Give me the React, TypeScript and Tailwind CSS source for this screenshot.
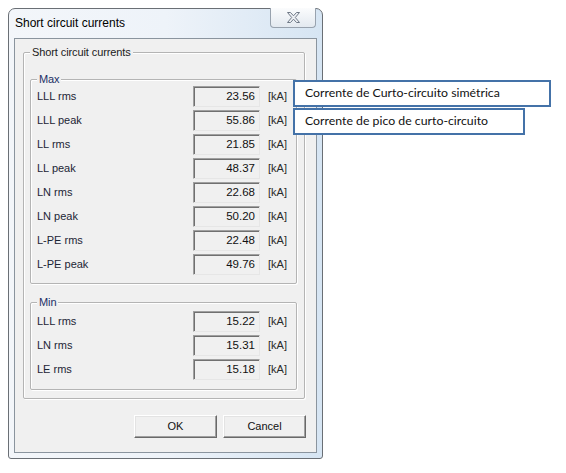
import React from "react";

const maxRows: [string, string][] = [
  ["LLL rms", "23.56"],
  ["LLL peak", "55.86"],
  ["LL rms", "21.85"],
  ["LL peak", "48.37"],
  ["LN rms", "22.68"],
  ["LN peak", "50.20"],
  ["L-PE rms", "22.48"],
  ["L-PE peak", "49.76"],
];

const minRows: [string, string][] = [
  ["LLL rms", "15.22"],
  ["LN rms", "15.31"],
  ["LE rms", "15.18"],
];

function Row({ label, value }: { label: string; value: string }) {
  return (
    <div className="flex items-center h-[21px]">
      <div className="w-[156px] text-[11px] text-[#1c2535] leading-none">{label}</div>
      <div className="w-[67px] h-[21px] flex items-center justify-end pr-[4px] bg-[#f0f0f0] border border-t-[#a0a0a0] border-l-[#a0a0a0] border-b-[#e6e6e6] border-r-[#e6e6e6] shadow-[inset_1px_1px_0_#707070] text-[11.5px] text-[#111] leading-none">
        {value}
      </div>
      <div className="ml-[8px] text-[11px] text-[#2a2a2a] leading-none">[kA]</div>
    </div>
  );
}

function Group({
  label,
  labelColor,
  className,
  children,
}: {
  label: string;
  labelColor: string;
  className: string;
  children?: React.ReactNode;
}) {
  return (
    <div className={"relative border border-[#b4b4b4] rounded-[2px] shadow-[1px_1px_0_#ffffff,inset_1px_1px_0_#ffffff] " + className}>
      <span className={"absolute -top-[8px] left-[6px] px-[2px] bg-[#f0f0f0] text-[11px] leading-[14px] tracking-[-0.1px] " + labelColor}>
        {label}
      </span>
      {children}
    </div>
  );
}

function Btn({ children }: { children: React.ReactNode }) {
  return (
    <button className="w-[83px] h-[23px] flex items-center justify-center bg-[#f0f0f0] border border-t-[#ffffff] border-l-[#ffffff] border-b-[#696969] border-r-[#696969] shadow-[inset_-1px_-1px_0_#a0a0a0,inset_1px_1px_0_#e3e3e3] text-[11px] text-[#111]">
      {children}
    </button>
  );
}

export default function App() {
  return (
    <div
      className="relative w-[566px] h-[473px] bg-white overflow-hidden pt-[8px]"
      style={{ fontFamily: '"Liberation Sans", Arial, sans-serif' }}
    >
      {/* window */}
      <div className="ml-[8px] w-[315px] h-[451px] flex flex-col px-[5px] pb-[5px] rounded-t-[7px] rounded-b-[3px] border border-[#6a6f75] bg-gradient-to-r from-[#f3f6fa] via-[#eef3f9] to-[#d6e5f3]">
        {/* title bar */}
        <div className="h-[29px] flex items-start justify-between">
          <div className="pl-[1px] leading-[28px] text-[12px] text-black">Short circuit currents</div>
          <div className="-mt-px mr-px w-[46px] h-[20px] flex items-center justify-center rounded-b-[4px] border border-t-0 border-[#98a2ae] bg-gradient-to-b from-[#fbfcfd] to-[#e3e9f0]">
            <svg width="13" height="11" viewBox="0 0 13 11">
              <polygon
                points="0.5,0.5 3.5,0.5 6.5,3.8 9.5,0.5 12.5,0.5 8.3,5.5 12.5,10.5 9.5,10.5 6.5,7.2 3.5,10.5 0.5,10.5 4.7,5.5"
                fill="#eef1f5"
                stroke="#6f7987"
                strokeWidth="1"
                strokeLinejoin="round"
              />
            </svg>
          </div>
        </div>
        {/* client */}
        <div className="w-[303px] h-[415px] border border-[#8a949e] bg-[#f0f0f0]">
          <Group label="Short circuit currents" labelColor="text-[#1a1a1a]" className="ml-[8px] mt-[13px] w-[282px] h-[347px]">
            <Group label="Max" labelColor="text-[#1b2f66]" className="ml-[6px] mt-[26px] w-[267px] h-[205px]">
              <div className="pt-[6px] pl-[6px] flex flex-col gap-[3px]">
                {maxRows.map(([l, v]) => (
                  <Row key={l} label={l} value={v} />
                ))}
              </div>
            </Group>
            <Group label="Min" labelColor="text-[#1b2f66]" className="ml-[6px] mt-[18px] w-[267px] h-[88px]">
              <div className="pt-[8px] pl-[6px] flex flex-col gap-[3px]">
                {minRows.map(([l, v]) => (
                  <Row key={l} label={l} value={v} />
                ))}
              </div>
            </Group>
          </Group>
          <div className="mt-[16px] pr-[10px] flex justify-end gap-[6px]">
            <Btn>OK</Btn>
            <Btn>Cancel</Btn>
          </div>
        </div>
      </div>

      {/* callouts */}
      <div
        className="absolute left-[293px] top-[80px] w-[258px] h-[27px] border-2 border-[#4472a8] bg-white flex items-center pl-[10px] text-[12.3px] text-[#111]"
        style={{ fontFamily: 'Lato, "Noto Sans", sans-serif' }}
      >
        Corrente de Curto-circuito simétrica
      </div>
      <div
        className="absolute left-[293px] top-[108px] w-[232px] h-[27px] border-2 border-[#4472a8] bg-white flex items-center pl-[10px] text-[12.3px] text-[#111]"
        style={{ fontFamily: 'Lato, "Noto Sans", sans-serif' }}
      >
        Corrente de pico de curto-circuito
      </div>
    </div>
  );
}
